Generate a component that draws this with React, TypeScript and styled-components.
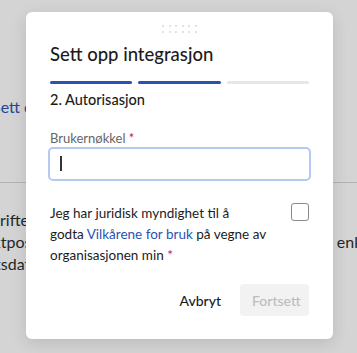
import styled, { createGlobalStyle } from "styled-components";

const GlobalStyle = createGlobalStyle`
  html, body {
    margin: 0;
    padding: 0;
    background: #ffffff;
  }
  body {
    font-family: "Lato", "Liberation Sans", sans-serif;
    -webkit-font-smoothing: antialiased;
  }
`;

const Page = styled.div`
  position: relative;
  width: 357px;
  height: 353px;
  overflow: hidden;
  background: #ffffff;
`;

const Content = styled.div`
  width: 480px;
  padding-top: 96px;
  color: #2e2e2e;
  font-size: 16px;
`;

const Line = styled.div<{ $indent: number }>`
  margin-left: ${({ $indent }) => $indent}px;
  line-height: 22px;
  white-space: nowrap;
`;

const PageLink = styled(Line)`
  color: #2a55b5;
  margin-bottom: 64px;
`;

const Divider = styled.hr`
  margin: 0 0 26px;
  border: 0;
  border-top: 1px solid #d8d8d8;
  width: 600px;
`;

const Paragraph = styled.div`
  margin-bottom: 72px;
`;

const Overlay = styled.div`
  position: absolute;
  inset: 0;
  background: rgba(0, 0, 0, 0.17);
`;

const Modal = styled.div`
  position: absolute;
  left: 26px;
  top: 12px;
  width: 307px;
  height: 327px;
  box-sizing: border-box;
  background: #ffffff;
  border-radius: 6px;
  box-shadow: 0 4px 16px rgba(0, 0, 0, 0.12);
  padding: 13px 24px 23px;
  display: flex;
  flex-direction: column;
  color: #1c1c1c;
`;

const Handle = styled.div`
  align-self: center;
  display: grid;
  grid-template-columns: repeat(6, 2px);
  gap: 4px 4.5px;
  margin-bottom: 9px;
`;

const Dot = styled.span`
  width: 2px;
  height: 2px;
  border-radius: 50%;
  background: #d9d9d9;
`;

const Title = styled.h2`
  margin: 0;
  font-size: 18.5px;
  line-height: 24px;
  font-weight: 500;
`;

const Steps = styled.div`
  display: flex;
  gap: 6px;
  margin-top: 15px;
`;

const Step = styled.div<{ $done: boolean }>`
  flex: 1;
  height: 3px;
  border-radius: 2px;
  background: ${({ $done }) => ($done ? "#2853b3" : "#e6e6e6")};
`;

const StepTitle = styled.h3`
  margin: 6px 0 0;
  font-size: 14.5px;
  line-height: 20px;
  font-weight: 500;
`;

const Label = styled.label`
  display: block;
  margin-top: 19px;
  font-size: 13px;
  line-height: 18px;
  color: #666666;
`;

const Required = styled.span`
  color: #c0223f;
`;

const InputWrap = styled.div`
  position: relative;
  margin-top: 0;
`;

const Input = styled.input`
  display: block;
  box-sizing: border-box;
  width: calc(100% + 4px);
  margin: 0 -2px;
  height: 34px;
  border: 2px solid #b6c9f2;
  border-radius: 5px;
  outline: none;
  padding: 0 10px;
  font-size: 14px;
  font-family: inherit;
`;

const Caret = styled.span`
  position: absolute;
  left: 10px;
  top: 9px;
  width: 1.5px;
  height: 15px;
  background: #333;
`;

const Consent = styled.div`
  display: flex;
  align-items: flex-start;
  justify-content: space-between;
  margin-top: 22px;
`;

const ConsentText = styled.p`
  margin: 0;
  width: 230px;
  font-size: 13.5px;
  line-height: 21px;
  color: #1c1c1c;
`;

const Link = styled.a`
  color: #2853b3;
  text-decoration: none;
`;

const Checkbox = styled.span`
  box-sizing: border-box;
  width: 18px;
  height: 18px;
  margin-top: 0;
  border: 1.5px solid #8a8a8a;
  border-radius: 3px;
`;

const Actions = styled.div`
  margin-top: auto;
  display: flex;
  justify-content: flex-end;
  align-items: center;
  gap: 19px;
`;

const Button = styled.button<{ $primary?: boolean }>`
  height: 32px;
  padding: 0 ${({ $primary }) => ($primary ? "12px" : "0")};
  border: 0;
  border-radius: 4px;
  font-family: inherit;
  font-size: 14px;
  font-weight: 500;
  background: ${({ $primary }) => ($primary ? "#f2f2f2" : "transparent")};
  color: ${({ $primary }) => ($primary ? "#bdbdbd" : "#1c1c1c")};
  width: ${({ $primary }) => ($primary ? "69px" : "auto")};
`;

export default function App() {
  return (
    <>
      <GlobalStyle />
      <Page>
        <Content>
          <PageLink $indent={-8}>Sett opp integrasjonen</PageLink>
          <Divider />
          <Paragraph>
            <Line $indent={-12}>Driften av tjenesten krever</Line>
            <Line $indent={-49}>Kontaktpost for avtalen må godta vilkårene og legge til enkelt</Line>
            <Line $indent={-62}>Oppstartsdato for oppsettet</Line>
          </Paragraph>
          <Line $indent={-29}>ved å følge disse trinnene:</Line>
        </Content>
        <Overlay />
        <Modal>
          <Handle>
            {Array.from({ length: 12 }).map((_, i) => (
              <Dot key={i} />
            ))}
          </Handle>
          <Title>Sett opp integrasjon</Title>
          <Steps>
            <Step $done />
            <Step $done />
            <Step $done={false} />
          </Steps>
          <StepTitle>2. Autorisasjon</StepTitle>
          <Label>
            Brukernøkkel <Required>*</Required>
          </Label>
          <InputWrap>
            <Input />
            <Caret />
          </InputWrap>
          <Consent>
            <ConsentText>
              Jeg har juridisk myndighet til å
              <br />
              godta <Link>Vilkårene for bruk</Link> på vegne av
              <br />
              organisasjonen min <Required>*</Required>
            </ConsentText>
            <Checkbox />
          </Consent>
          <Actions>
            <Button>Avbryt</Button>
            <Button $primary disabled>
              Fortsett
            </Button>
          </Actions>
        </Modal>
      </Page>
    </>
  );
}
